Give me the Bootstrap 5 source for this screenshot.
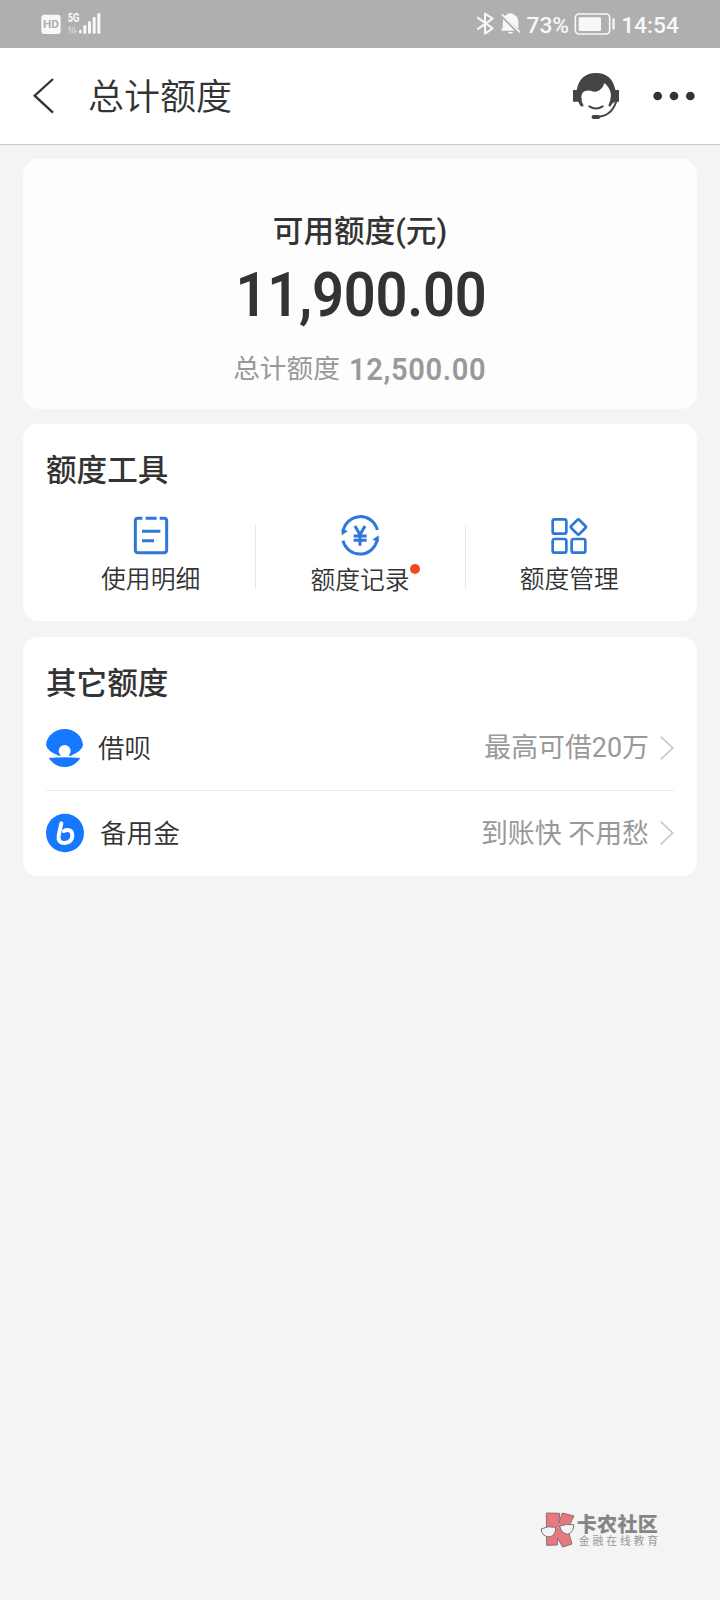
<!DOCTYPE html>
<html lang="zh-CN">
<head>
<meta charset="utf-8">
<meta name="viewport" content="width=device-width, initial-scale=1">
<title>总计额度</title>
<link href="https://cdn.jsdelivr.net/npm/bootstrap@5.3.0/dist/css/bootstrap.min.css" rel="stylesheet">
<style>
body{background:#f4f4f4;color:#333;font-family:Roboto,"Noto Sans CJK SC",sans-serif;min-height:1600px;white-space:nowrap}
svg{display:block;flex:none;overflow:visible}
.status-bar{height:48px;background:#afafaf;color:#f8f8f8;padding:0 41px 0 41px;font-size:22.8px;font-weight:500}
.status-bar span{padding-top:4px}
.title-bar{height:97px;background:#fff;border-bottom:1px solid #c8c8c8;padding:0 24px 0 33px}
.title-bar h1{font-size:36px;line-height:96px;margin:0 0 0 33px;padding-top:3px;font-weight:350}
.content{padding:14px 23px 0;gap:15px}
.panel{background:#fff;border-radius:15px;padding:0 23px}
.panel h2{font-size:30.6px;line-height:44px;font-weight:500;margin:0;padding-top:25px;height:68px}
.summary{height:250px;background:#fdfdfd;padding-top:51px}
.summary .caption{font-size:30.6px;line-height:44px;font-weight:500}
.amount{font-size:61.5px;line-height:64px;font-weight:600;letter-spacing:-.2px;margin-top:9px;transform:translateX(1px) scaleX(.91)}
.total{font-size:26.7px;line-height:36px;color:#999;margin-top:24px}
.total b{font-size:32px;font-weight:600;letter-spacing:.7px;transform:scaleX(.91);transform-origin:left;margin-right:-13px}
.tools{height:197px}
.tool{font-size:24.8px;line-height:36px;height:100px;padding-top:19px;font-weight:350}
.tool span{margin-top:1px}
.tool + .tool::before{content:"";position:absolute;left:0;top:33px;width:1px;height:64px;background:#e8e8e8}
.dot{left:100%;top:1px;width:10px;height:10px;background:#f5481f}
.others{height:239px;margin-top:1px}
.entry{height:85px;font-size:26.6px;font-weight:350}
.entry span{padding-top:2px}
.entry + .entry{border-top:1px solid #ebebeb}
.hint{color:#999;font-size:26.9px;font-weight:400}
.community{padding:0 59px 47px 0;color:#858585}
.community strong{font-size:20px;line-height:20px;letter-spacing:.3px;font-weight:900}
.community small{font-size:10.8px;line-height:14px;letter-spacing:2.9px;color:#999;padding-left:2px}
</style>
</head>
<body class="d-flex flex-column">
<header>
  <div class="status-bar d-flex align-items-center justify-content-between">
    <svg width="62" height="24" viewBox="63 38 186 72" fill="#f8f8f8">
      <rect x="64" y="46" width="58" height="58" rx="9"/>
      <text x="69" y="87" font-size="35" font-weight="700" textLength="48" lengthAdjust="spacingAndGlyphs" fill="#afafaf">HD</text>
      <text x="143" y="69" font-size="37" font-weight="700" textLength="35" lengthAdjust="spacingAndGlyphs">5G</text>
      <path d="M150 102V83l-6 8M157 83v19M164 82v20l6-8" fill="none" stroke="#d0d0d0" stroke-width="4"/>
      <rect x="177" y="91" width="8" height="11" rx="3"/><rect x="190" y="78" width="9" height="25" rx="3"/><rect x="204" y="66" width="9" height="37" rx="3"/><rect x="218" y="53" width="9" height="50" rx="3"/><rect x="232" y="41" width="9" height="62" rx="3"/>
    </svg>
    <div class="d-flex align-items-center">
      <svg width="50" height="24" viewBox="50 37 150 72">
        <path d="M54 53l46 33-23 16V42l23 15-46 32" fill="none" stroke="#f8f8f8" stroke-width="6" stroke-linejoin="round"/>
        <path d="M141 46q3-5 12-5 9 0 12 5 12 5 12 22v20L135 49zM131 58l35 35h-39q-3-3 3-8zM146 97h15q-2 5-8 5t-7-5z" fill="#f8f8f8"/>
        <path d="M128 44l54 54" stroke="#f8f8f8" stroke-width="5"/>
      </svg>
      <span>73%</span>
      <svg style="margin-left:5px" width="43" height="24" viewBox="342 37 129 72" fill="#f8f8f8">
        <rect x="346" y="43" width="103" height="60" rx="11" fill="none" stroke="#f8f8f8" stroke-width="5"/>
        <rect x="356" y="53" width="67" height="41" rx="4"/><rect x="457" y="56" width="7" height="34" rx="3"/>
      </svg>
      <span class="ms-1">14:54</span>
    </div>
  </div>
  <nav class="title-bar d-flex align-items-center">
    <svg width="22" height="36" viewBox="39 233 66 108"><path d="M99 236L44 286l55 51" fill="none" stroke="#333" stroke-width="7"/></svg>
    <h1 class="flex-grow-1">总计额度</h1>
    <svg width="46" height="46" viewBox="339 219 138 138">
      <path fill="#444" d="M339 270H350Q360 219 408 219 456 219 466 270H477V305H466Q456 308 451 320L445 317Q453 298 453 284 450 262 433 249 428 268 412 274 403 277 392 272 364 268 364 291 364 306 371 317L365 320Q358 315 355 305H339Z"/>
      <path fill="none" stroke="#444" stroke-width="6" stroke-linecap="round" d="M388 319q20 13 40 0M469 303q-13 44-54 47"/>
      <rect x="395" y="345" width="25" height="12" rx="5" fill="#444"/>
    </svg>
    <svg style="margin-left:34px" width="43" height="12" viewBox="579 270 129 36" fill="#333"><circle cx="593" cy="288" r="13"/><circle cx="642" cy="288" r="13"/><circle cx="691" cy="288" r="13"/></svg>
  </nav>
</header>
<main class="content d-flex flex-column flex-grow-1">
  <section class="panel summary text-center">
    <div class="caption">可用额度(元)</div>
    <div class="amount">11,900.00</div>
    <div class="total d-flex justify-content-center align-items-center"><span style="margin-right:9px">总计额度</span><b>12,500.00</b></div>
  </section>
  <section class="panel tools">
    <h2>额度工具</h2>
    <div class="row g-0">
      <div class="col tool position-relative d-flex flex-column align-items-center">
        <svg width="44" height="50" viewBox="327 303 132 150" fill="none" stroke="#2b78da" stroke-width="9">
          <path d="M367 325h-13q-8 0-8 8v87q0 8 8 8h78q8 0 8-8v-87q0-8-8-8h-13M377 325h33M366 364h55M366 392h36"/>
        </svg>
        <span>使用明细</span>
      </div>
      <div class="col tool position-relative d-flex flex-column align-items-center">
        <svg width="44" height="50" viewBox="955 303 132 150" fill="none" stroke="#2b78da" stroke-width="9">
          <path d="M970 366A52.500 53 0 0 1 1073 360M970 392A52.500 53 0 0 0 1073 386"/>
          <path d="M966 376v-19l19 6zM1077 376v19l-19-6z" fill="#2b78da" stroke="none"/>
          <path d="M1006 348l15 26 15-26M1002 378h39M1002 391h39M1021 374v33"/>
        </svg>
        <span class="position-relative" style="top:1px">额度记录<i class="dot position-absolute rounded-circle"></i></span>
      </div>
      <div class="col tool position-relative d-flex flex-column align-items-center">
        <svg width="44" height="50" viewBox="563 303 132 150" fill="none" stroke="#2b78da" stroke-width="8">
          <rect x="580" y="328" width="41" height="43" rx="6"/><rect x="580" y="387" width="41" height="41" rx="6"/><rect x="637" y="387" width="41" height="41" rx="6"/>
          <rect x="640" y="334" width="34" height="34" rx="4" transform="rotate(45 657 351)"/>
        </svg>
        <span>额度管理</span>
      </div>
    </div>
  </section>
  <section class="panel others">
    <h2>其它额度</h2>
    <div class="entry d-flex align-items-center">
      <svg width="38" height="40" viewBox="78 294 114 120" fill="#1677ff">
        <path d="M78 345C80 318 104 297 134 297S187 318 189 345Q186 364 152 377H116Q82 364 78 345zM86 384q48-5 95 0-17 27-47 27t-48-27z"/>
        <circle cx="134" cy="363" r="18" fill="#fff"/>
      </svg>
      <span class="flex-grow-1" style="margin-left:14px">借呗</span>
      <span class="hint">最高可借20万</span>
      <svg style="margin-left:11px" width="14" height="26" viewBox="599 104 42 78"><path d="M601 109l36 34-36 34" fill="none" stroke="#c8c8c8" stroke-width="5"/></svg>
    </div>
    <div class="entry d-flex align-items-center">
      <svg width="38" height="40" viewBox="78 550 114 120">
        <ellipse cx="135" cy="610" rx="57" ry="58" fill="#1677ff"/>
        <path d="M124 581L116 618Q113 640 134 640 157 638 157 617 156 601 143 601 136 601 132 604" fill="none" stroke="#fff" stroke-width="12" stroke-linecap="round" stroke-linejoin="round"/>
      </svg>
      <span class="flex-grow-1" style="margin-left:16px">备用金</span>
      <span class="hint">到账快 不用愁</span>
      <svg style="margin-left:11px" width="14" height="26" viewBox="599 359 42 78"><path d="M601 364l36 34-36 34" fill="none" stroke="#c8c8c8" stroke-width="5"/></svg>
    </div>
  </section>
</main>
<footer class="community d-flex justify-content-end align-items-center">
  <svg class="mb-1" width="37" height="38" viewBox="58 65 111 114">
    <path fill="#e77880" stroke="#8b7073" stroke-width="3" d="M77 71L117 72 115 100 125 71 160 80 141 118 154 164 126 173 110 146V167L78 168z"/>
    <g fill="#f4f4f4" stroke="#777" stroke-width="3"><path d="M61 119q20-11 44-5 1 25-20 29-21-2-24-24zM117 110q19-7 42-4 1 21-17 29-20-2-25-25zM105 117q6-9 12-4"/></g>
  </svg>
  <div class="d-flex flex-column"><strong>卡农社区</strong><small>金融在线教育</small></div>
</footer>
<script src="https://cdn.jsdelivr.net/npm/bootstrap@5.3.0/dist/js/bootstrap.bundle.min.js"></script>
</body>
</html>
